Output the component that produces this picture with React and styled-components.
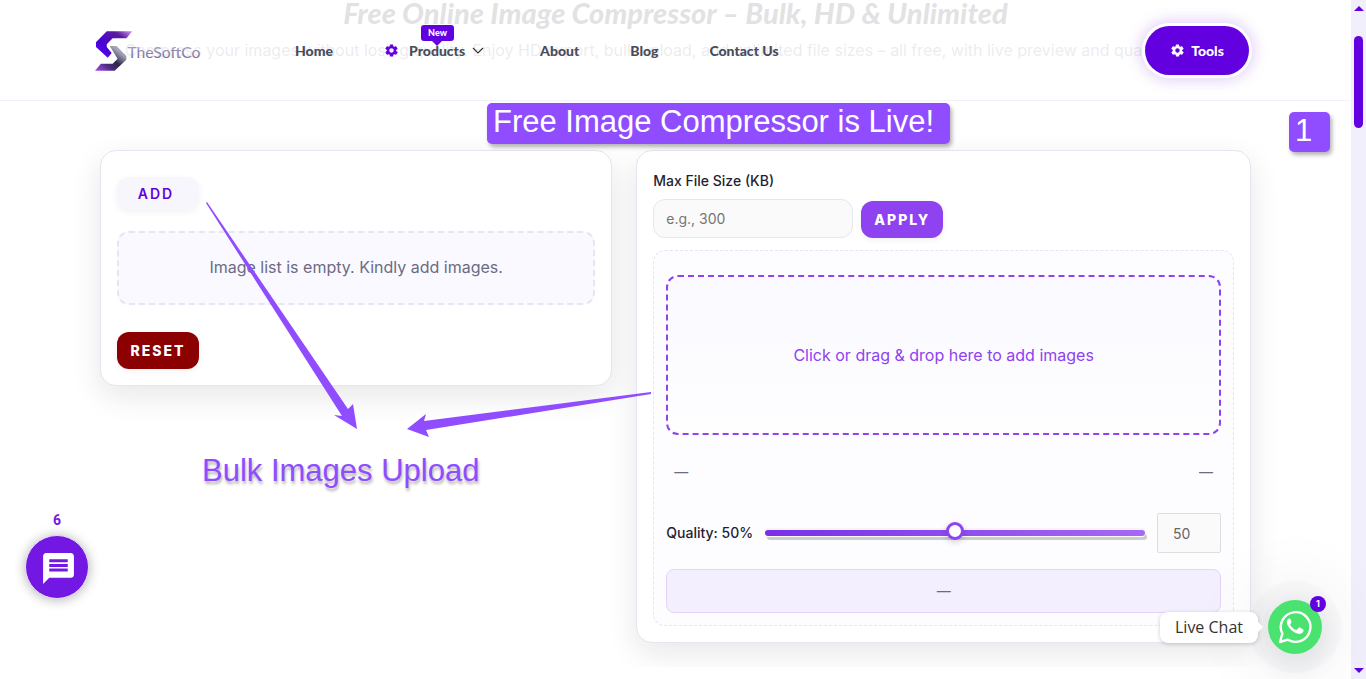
import React, { useState } from 'react';
import styled, { createGlobalStyle } from 'styled-components';
import { MdMessage } from 'react-icons/md';
import { IoMdSettings } from 'react-icons/io';

const colors = {
  primary: '#6200e0',
  violet: '#8e42f0',
  mark: '#904cff',
  text: '#1f1f33',
  muted: '#6b6b84',
  nav: '#4a4c5c',
  line: '#e6e5f0',
};

const GlobalStyle = createGlobalStyle`
  * {
    box-sizing: border-box;
  }
  body {
    margin: 0;
    background: #fff;
    color: ${colors.text};
    font-family: Inter, "Liberation Sans", sans-serif;
    overflow: hidden;
  }
  button, input {
    font-family: inherit;
  }
`

const Page = styled.div`
  position: relative;
  display: flex;
  height: 100vh;
  overflow: hidden;
`

const Content = styled.div`
  flex: 1;
  min-width: 0;
`

const Header = styled.header`
  position: absolute;
  z-index: 2;
  top: 0;
  left: 0;
  right: 15px;
  display: flex;
  align-items: center;
  padding: 26px 102px 25px 94px;
  border-bottom: 1px solid #f2f0fc;
  background: rgba(255, 255, 255, 0.87);
`

const Logo = styled.a`
  display: flex;
  width: 108px;
  margin-right: 93px;
`

const Nav = styled.nav`
  display: flex;
  flex: 1;
  align-items: center;
  gap: 51px;
`

const NavLink = styled.a`
  position: relative;
  display: flex;
  align-items: center;
  color: ${colors.nav};
  font-family: Lato, sans-serif;
  font-size: 14px;
  font-weight: 900;
  line-height: 20px;
  text-decoration: none;
  white-space: nowrap;
`

const GearBox = styled.span`
  display: flex;
  margin-right: 10px;
  color: ${colors.primary};
`

const Chevron = styled.svg`
  margin: 0 5px 0 7px;
`

const NewTag = styled.span`
  position: absolute;
  top: -16px;
  left: 37px;
  width: 33px;
  border-radius: 3px;
  background: ${colors.primary};
  color: #fff;
  font-size: 9px;
  line-height: 16px;
  text-align: center;

  &::after {
    content: "";
    position: absolute;
    top: 16px;
    left: 11px;
    border: 5px solid transparent;
    border-top-color: ${colors.primary};
    border-bottom: 0;
  }
`

const ToolsButton = styled.button`
  display: flex;
  align-items: center;
  justify-content: center;
  gap: 6px;
  width: 104px;
  height: 49px;
  border: 0;
  border-radius: 25px;
  background: ${colors.primary};
  box-shadow: 0 0 0 3px #fff, 0 0 16px 4px rgba(98, 0, 224, 0.22);
  color: #fff;
  font-family: Lato, sans-serif;
  font-size: 14px;
  font-weight: 900;
`

const Hero = styled.section`
  height: 100px;
  text-align: center;
  white-space: nowrap;
  overflow: hidden;
`

const Title = styled.h1`
  margin: 0;
  font-family: Lato, sans-serif;
  font-size: 29px;
  font-style: italic;
  font-weight: 900;
  line-height: 26px;
`

const Lead = styled.p`
  display: flex;
  justify-content: center;
  margin: 12px 0 0;
  color: ${colors.muted};
  font-size: 16px;
  line-height: 24px;
`

const Workspace = styled.main`
  display: grid;
  grid-template-columns: 1fr 1.2fr;
  gap: 24px;
  align-items: start;
  padding: 50px 100px 24px;
  overflow: hidden;
`

const Card = styled.section`
  padding: ${(props) => (props.$tall ? '19px 16px 16px' : '26px 16px 16px')};
  border: 1px solid ${colors.line};
  border-radius: 16px;
  background: #fff;
  box-shadow: 0 10px 30px rgba(20, 20, 40, 0.1);
`

const Button = styled.button`
  display: block;
  width: 82px;
  height: 37px;
  padding: 0;
  border: 0;
  border-radius: 12px;
  background: ${(props) => props.$bg};
  box-shadow: 0 2px 6px rgba(20, 20, 40, 0.06);
  color: #fff;
  font-size: 14px;
  font-weight: 800;
  letter-spacing: 2px;
`

const AddButton = styled(Button)`
  height: 33px;
  padding-right: 4px;
  color: ${colors.primary};
  font-weight: 600;
`

const EmptyList = styled.div`
  margin: 21px 0 27px;
  padding: 22px 16px 24px;
  border: 2px dashed ${colors.line};
  border-radius: 12px;
  background: #faf9ff;
  color: ${colors.muted};
  font-size: 16px;
  line-height: 24px;
  text-align: center;
`

const Label = styled.label`
  font-size: 14px;
  font-weight: 450;
  line-height: 18px;
  white-space: nowrap;
`

const SizeRow = styled.div`
  display: flex;
  align-items: flex-end;
  gap: 8px;
  margin: 9px 0 12px;
`

const SizeInput = styled.input`
  width: 200px;
  height: 39px;
  padding: 0 12px;
  border: 1px solid ${colors.line};
  border-radius: 12px;
  background: #fafafa;
  font-size: 14px;

  &::placeholder {
    color: #757575;
  }
`

const Panel = styled.div`
  padding: 24px 12px 12px;
  border: 1px dashed ${colors.line};
  border-radius: 12px;
  background: #fdfdff;
`

const DropZone = styled.button`
  display: block;
  width: 100%;
  height: 160px;
  border: 2px dashed ${colors.violet};
  border-radius: 12px;
  background: linear-gradient(#faf9ff, #fefeff);
  color: ${colors.violet};
  font-size: 16px;
`

const Sizes = styled.div`
  display: flex;
  justify-content: space-between;
  padding: 25px 8px 23px;
  color: ${colors.muted};
  font-size: 14px;
  line-height: 24px;
`

const QualityRow = styled.div`
  display: flex;
  align-items: center;
  gap: 12px;
  margin: 6px 0 16px;
`

const Slider = styled.input`
  flex: 1;
  min-width: 0;
  height: 6px;
  margin: 0;
  appearance: none;
  border-radius: 3px;
  background: linear-gradient(90deg, #7a2fe6, #a768f5);
  box-shadow: 0 1px 0 #fff, 0 -2px 0 #f5f5f7, 2px 4px 0 #ccc;

  &::-webkit-slider-thumb {
    appearance: none;
    width: 18px;
    height: 18px;
    margin-top: -4px;
    border: 3px solid ${colors.violet};
    border-radius: 50%;
    background: #fff;
    box-shadow: 0 2px 6px rgba(20, 20, 40, 0.2);
  }
`

const QualityInput = styled.input`
  width: 64px;
  height: 40px;
  padding: 0 15px;
  border: 1px solid #ddd;
  border-radius: 2px;
  background: #fafafa;
  color: #666;
  font-size: 14px;
`

const Result = styled.div`
  padding: 10px;
  border: 1px solid #e1d5fb;
  border-radius: 8px;
  background: #f4effe;
  color: ${colors.muted};
  font-size: 14px;
  line-height: 22px;
  text-align: center;
`

const Scrollbar = styled.div`
  display: flex;
  flex-direction: column;
  align-items: center;
  width: 15px;
  padding: 6px 0;
  background: #f0effb;
`

const Thumb = styled.div`
  width: 9px;
  height: 92px;
  margin: 25px 0 auto;
  border-radius: 5px;
  background: ${colors.primary};
`

const Arrow = styled.div`
  border: 5px solid transparent;
  border-${(props) => (props.$up ? 'bottom' : 'top')}-color: ${colors.primary};
  border-${(props) => (props.$up ? 'top' : 'bottom')}-width: 0;
`

// Callouts laid over the page
const Note = styled.div`
  position: absolute;
  z-index: 3;
  color: #fff;
  font-family: "Liberation Sans", Arial, sans-serif;
  font-size: 31px;
  line-height: 37px;
  white-space: nowrap;
`

const Banner = styled(Note)`
  top: 103px;
  left: 487px;
  width: 463px;
  height: 41px;
  padding-left: 6px;
  border-radius: 5px;
  background: ${colors.mark};
  box-shadow: 2px 3px 4px rgba(0, 0, 0, 0.3);
`

const StepNumber = styled(Banner)`
  top: 112px;
  left: 1289px;
  width: 41px;
  height: 40px;
`

const UploadNote = styled(Note)`
  top: 452px;
  left: 202px;
  color: ${colors.mark};
  text-shadow: 1px 3px 3px rgba(0, 0, 0, 0.3);
`

const Arrows = styled.svg`
  position: absolute;
  z-index: 3;
  top: 200px;
  left: 200px;
  pointer-events: none;
`

const ChatWidget = styled.div`
  position: absolute;
  left: 25px;
  bottom: 80px;
  display: flex;
  flex-direction: column;
  align-items: center;
  color: #7218e2;
  font-family: Roboto, sans-serif;
  font-size: 14px;
  font-weight: 700;
  line-height: 16px;
`

const ChatButton = styled.button`
  display: flex;
  align-items: center;
  justify-content: center;
  width: 64px;
  height: 64px;
  margin-top: 7px;
  padding: 2px 0 0 3px;
  border: 1px solid #e8dcfa;
  border-radius: 50%;
  background: #7218e2;
  box-shadow: 0 1px 12px rgba(0, 0, 0, 0.3);
  color: #fff;
`

const LiveChat = styled.div`
  position: absolute;
  z-index: 3;
  right: 44px;
  bottom: 25px;
  display: flex;
  align-items: center;
  gap: 10px;
`

const Bubble = styled.span`
  position: relative;
  z-index: 1;
  padding: 4px 15px;
  border-radius: 8px;
  background: #fff;
  box-shadow: 0 1px 4px rgba(0, 0, 0, 0.2);
  color: #333;
  font-family: "Open Sans", "Noto Sans", sans-serif;
  font-size: 16px;
  line-height: 23px;

  &::after {
    content: "";
    position: absolute;
    top: 10px;
    right: -5px;
    border: 5px solid transparent;
    border-left-color: #fff;
    border-right: 0;
  }
`

const WhatsAppButton = styled.button`
  position: relative;
  display: flex;
  align-items: center;
  justify-content: center;
  width: 54px;
  height: 54px;
  padding: 0;
  border: 0;
  border-radius: 50%;
  background: #4be36f;
  box-shadow: 0 0 0 19px rgba(40, 60, 80, 0.02), 0 8px 20px 8px rgba(40, 60, 80, 0.07), 0 0 70px 20px rgba(0, 0, 0, 0.06);
  color: #fff;
`

const Badge = styled.span`
  position: absolute;
  top: -4px;
  right: -4px;
  width: 16px;
  border-radius: 8px;
  background: ${colors.primary};
  font-size: 9px;
  font-weight: 700;
  line-height: 16px;
  text-align: center;
`

const LogoMark = () => (
  <svg width="110" height="42" viewBox="0 0 110 42" aria-label="TheSoftCo">
    <defs>
      <linearGradient id="logoTop" x1="0" y1="1" x2="1" y2="0">
        <stop offset="0" stopColor="#5a10f0" />
        <stop offset="0.35" stopColor="#4800d8" />
        <stop offset="0.75" stopColor="#5a1c9c" />
        <stop offset="1" stopColor="#d79af5" />
      </linearGradient>
      <linearGradient id="logoBottom" x1="0" y1="1" x2="1" y2="0">
        <stop offset="0" stopColor="#b04cf0" />
        <stop offset="0.3" stopColor="#4a2c80" />
        <stop offset="0.5" stopColor="#2e2848" />
        <stop offset="0.75" stopColor="#9a9ab0" />
        <stop offset="1" stopColor="#d5d5e4" />
      </linearGradient>
      <linearGradient id="logoText" x1="0" y1="0" x2="0" y2="1">
        <stop offset="0" stopColor="#b3a9cc" />
        <stop offset="1" stopColor="#6f6592" />
      </linearGradient>
    </defs>
    <path d="M39 1H13L2 12v5l12 11 4-5-5-6v-3l6-6h14z" fill="url(#logoTop)" />
    <path d="M16 16h7l10 10v4L21 41H1l6-7h12l5-5z" fill="url(#logoBottom)" />
    <text x="34" y="28" fill="url(#logoText)" fontFamily="Lato, sans-serif" fontSize="16">TheSoftCo</text>
  </svg>
)

const WhatsAppIcon = () => (
  <svg width="34" height="34" viewBox="0 0 34 34" fill="none">
    <path
      d="M2 32l2.400-8.300A14.800 14.800 0 1 1 10 29.700z"
      stroke="currentColor"
      strokeWidth="2.400"
      strokeLinejoin="round" />
    <path
      d="M11.500 8.500c-.9 0-1.600.6-2.200 1.500-1 1.700-.5 4 .8 6 2.200 3.400 5 6 9 7.500 2.500.9 5 .3 6-1.400.5-1 .6-2 .3-2.500-.3-.4-3.200-1.900-3.900-2.100-.6-.2-1 .1-1.400.7l-1.300 1.500c-.4.4-.8.4-1.300.1-2.300-1.100-4-2.600-5.200-4.800-.3-.5-.1-.8.2-1.200.8-.8 1.200-1.500.9-2.300l-1.100-2.400c-.2-.5-.4-.6-.8-.6z"
      fill="currentColor" />
  </svg>
)

const App = () => {
  const [maxSize, setMaxSize] = useState('');
  const [quality, setQuality] = useState(50);

  return (
    <>
      <GlobalStyle />
      <Page>
        <Content>
          <Header>
            <Logo href="#"><LogoMark /></Logo>
            <Nav>
              <NavLink href="#">Home</NavLink>
              <NavLink href="#">
                <GearBox><IoMdSettings size={15} /></GearBox>
                Products
                <Chevron width="12" height="8" viewBox="0 0 12 8" fill="none" stroke="#333" strokeWidth="1.2">
                  <path d="M1 1l5 5 5-5" />
                </Chevron>
                <NewTag>New</NewTag>
              </NavLink>
              <NavLink href="#">About</NavLink>
              <NavLink href="#">Blog</NavLink>
              <NavLink href="#">Contact Us</NavLink>
            </Nav>
            <ToolsButton type="button"><IoMdSettings size={15} />Tools</ToolsButton>
          </Header>

          <Hero>
            <Title>Free Online Image Compressor – Bulk, HD &amp; Unlimited</Title>
            <Lead>Compress your images without losing quality. Enjoy HD export, bulk upload, and unlimited file sizes – all free, with live preview and quality control.</Lead>
          </Hero>

          <Workspace>
            <Card>
              <AddButton type="button" $bg="#f7f6fc">ADD</AddButton>
              <EmptyList>Image list is empty. Kindly add images.</EmptyList>
              <Button type="button" $bg="#8b0000">RESET</Button>
            </Card>

            <Card $tall>
              <Label htmlFor="maxSize">Max File Size (KB)</Label>
              <SizeRow>
                <SizeInput
                  id="maxSize"
                  type="text"
                  placeholder="e.g., 300"
                  value={maxSize}
                  onChange={(e) => setMaxSize(e.target.value)} />
                <Button type="button" $bg={colors.violet}>APPLY</Button>
              </SizeRow>
              <Panel>
                <DropZone type="button">Click or drag &amp; drop here to add images</DropZone>
                <Sizes>
                  <span>—</span>
                  <span>—</span>
                </Sizes>
                <QualityRow>
                  <Label htmlFor="quality">Quality: {quality}%</Label>
                  <Slider
                    id="quality"
                    type="range"
                    min="0"
                    max="100"
                    value={quality}
                    onChange={(e) => setQuality(e.target.value)} />
                  <QualityInput
                    type="text"
                    aria-label="Quality value"
                    value={quality}
                    onChange={(e) => setQuality(e.target.value)} />
                </QualityRow>
                <Result>—</Result>
              </Panel>
            </Card>
          </Workspace>
        </Content>

        <Scrollbar>
          <Arrow $up />
          <Thumb />
          <Arrow />
        </Scrollbar>

        <Banner>Free Image Compressor is Live!</Banner>
        <StepNumber>1</StepNumber>
        <UploadNote>Bulk Images Upload</UploadNote>
        <Arrows width="460" height="240" viewBox="200 200 460 240" fill={colors.mark}>
          <path d="M206 203L342 416l-8-1 23 14-4-25-5 5L207 202z" />
          <path d="M651 392L424 421l2-7-19 15 22 8-3-7L651 394z" />
        </Arrows>

        <ChatWidget>
          <span>6</span>
          <ChatButton type="button" aria-label="Messages"><MdMessage size={37} /></ChatButton>
        </ChatWidget>

        <LiveChat>
          <Bubble>Live Chat</Bubble>
          <WhatsAppButton type="button" aria-label="WhatsApp">
            <WhatsAppIcon />
            <Badge>1</Badge>
          </WhatsAppButton>
        </LiveChat>
      </Page>
    </>
  );
};

export default App;
